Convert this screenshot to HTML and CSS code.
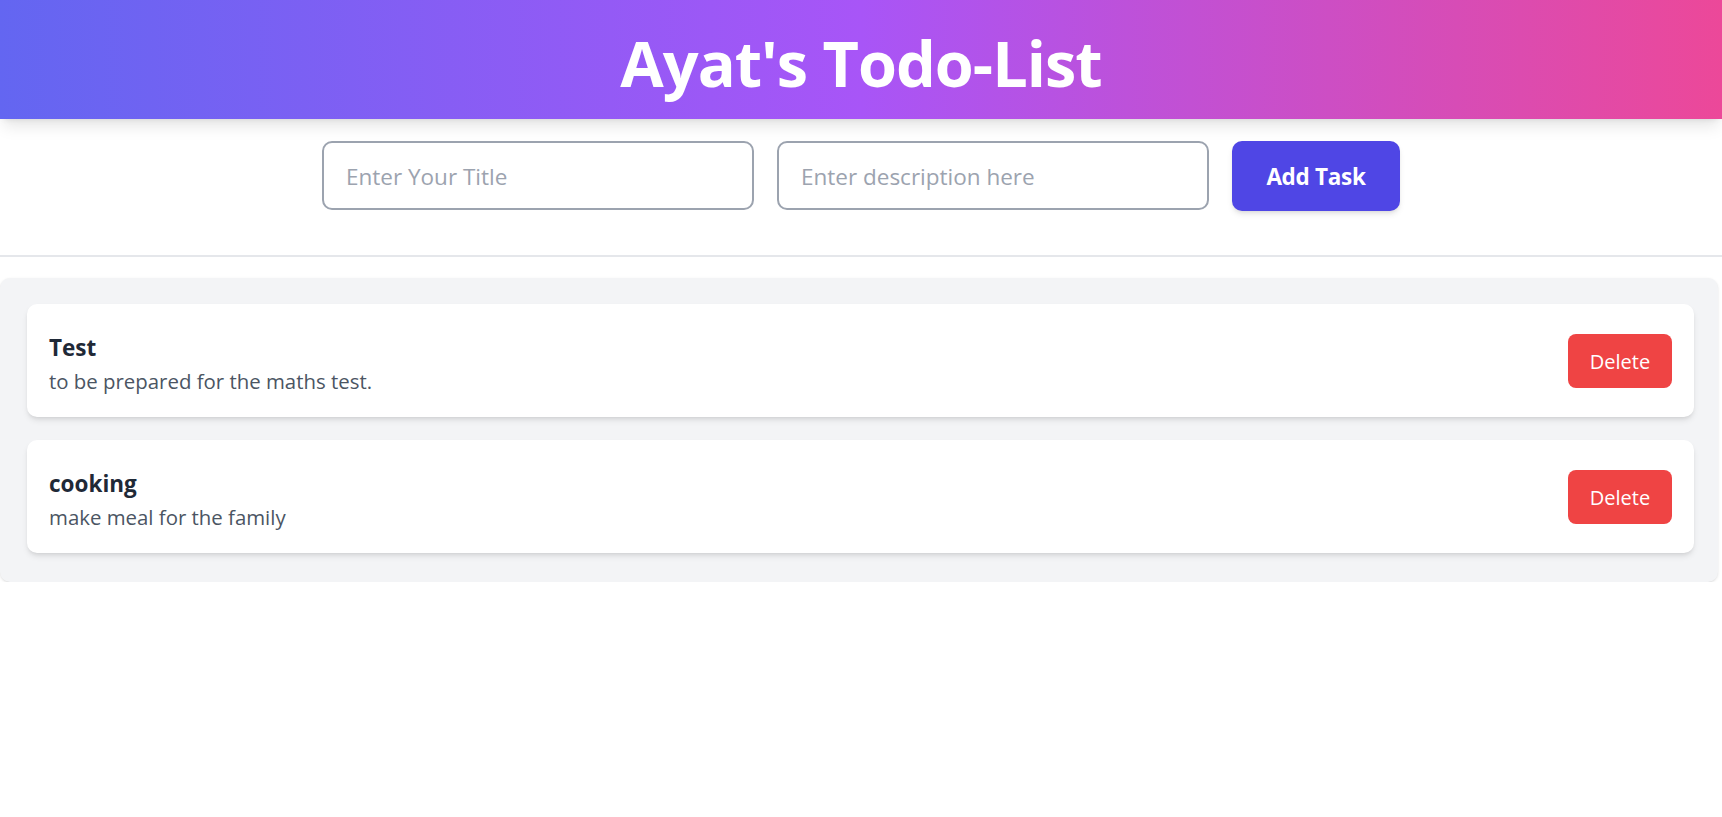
FILE: index.html
```html
<!DOCTYPE html>
<html lang="en">
<head>
<meta charset="utf-8">
<title>Ayat's Todo-List</title>
<link rel="stylesheet" href="styles.css">
</head>
<body>
  <header class="site-header">
    <h1 class="site-title">Ayat's Todo-List</h1>
  </header>
  <form class="task-form">
    <input class="task-input" type="text" placeholder="Enter Your Title">
    <input class="task-input" type="text" placeholder="Enter description here">
    <button class="add-btn" type="button">Add Task</button>
  </form>
  <hr class="divider">
  <main class="task-list">
    <div class="task-card">
      <div class="task-text">
        <h2 class="task-title">Test</h2>
        <p class="task-desc">to be prepared for the maths test.</p>
      </div>
      <button class="delete-btn" type="button">Delete</button>
    </div>
    <div class="task-card">
      <div class="task-text">
        <h2 class="task-title">cooking</h2>
        <p class="task-desc">make meal for the family</p>
      </div>
      <button class="delete-btn" type="button">Delete</button>
    </div>
  </main>
</body>
</html>
```
FILE: styles.css
```css
* { box-sizing: border-box; }
html, body { margin: 0; padding: 0; background: #ffffff; }
body { font-family: "Open Sans", "Noto Sans", sans-serif; color: #1f2937; }

.site-header {
  height: 119px;
  padding-top: 5px;
  display: flex;
  align-items: center;
  justify-content: center;
  background: linear-gradient(to right, #6366f1, #a855f7, #ec4899);
  box-shadow: 0 10px 15px -3px rgba(0,0,0,0.1), 0 4px 6px -4px rgba(0,0,0,0.1);
}
.site-title {
  margin: 0;
  color: #ffffff;
  font-size: 63px;
  font-weight: 700;
  line-height: 1;
  letter-spacing: -1px;
}

.task-form {
  display: flex;
  justify-content: center;
  gap: 23px;
  margin-top: 22px;
}
.task-input {
  width: 432px;
  height: 69px;
  border: 2px solid #9ca3af;
  border-radius: 10px;
  padding: 2px 22px 0;
  font-family: inherit;
  font-size: 22.5px;
  color: #1f2937;
  outline: none;
}
.task-input::placeholder { color: #9ca3af; }
.add-btn {
  width: 168px;
  height: 70px;
  border: none;
  border-radius: 10px;
  background: #4f46e5;
  color: #ffffff;
  font-family: inherit;
  font-size: 22.5px;
  font-weight: 700;
  letter-spacing: -0.3px;
  box-shadow: 0 4px 6px -1px rgba(0,0,0,0.1), 0 2px 4px -2px rgba(0,0,0,0.1);
}

.divider {
  margin: 44px 0 21px;
  border: none;
  border-top: 2px solid #e5e7eb;
  height: 0;
}

.task-list {
  width: calc(100% - 4px);
  background: #f3f4f6;
  border-radius: 10px;
  padding: 26px 24px 29px 27px;
  display: flex;
  flex-direction: column;
  gap: 23px;
  box-shadow: 0 1px 3px rgba(0,0,0,0.1), 0 1px 2px -1px rgba(0,0,0,0.1);
}
.task-card {
  background: #ffffff;
  border-radius: 10px;
  height: 113px;
  padding: 0 22px;
  display: flex;
  align-items: center;
  justify-content: space-between;
  box-shadow: 0 4px 6px -1px rgba(0,0,0,0.1), 0 2px 4px -2px rgba(0,0,0,0.1);
}
.task-text { display: flex; flex-direction: column; padding-top: 6px; }
.task-title {
  margin: 0;
  font-size: 22.5px;
  font-weight: 700;
  color: #1f2937;
  line-height: 32px;
}
.task-desc {
  margin: 2px 0 0;
  font-size: 20.4px;
  color: #4b5563;
  line-height: 30px;
}
.delete-btn {
  width: 104px;
  height: 54px;
  border: none;
  border-radius: 8px;
  background: #ef4444;
  color: #ffffff;
  font-family: inherit;
  font-size: 20px;
  padding-top: 2px;
}
```
